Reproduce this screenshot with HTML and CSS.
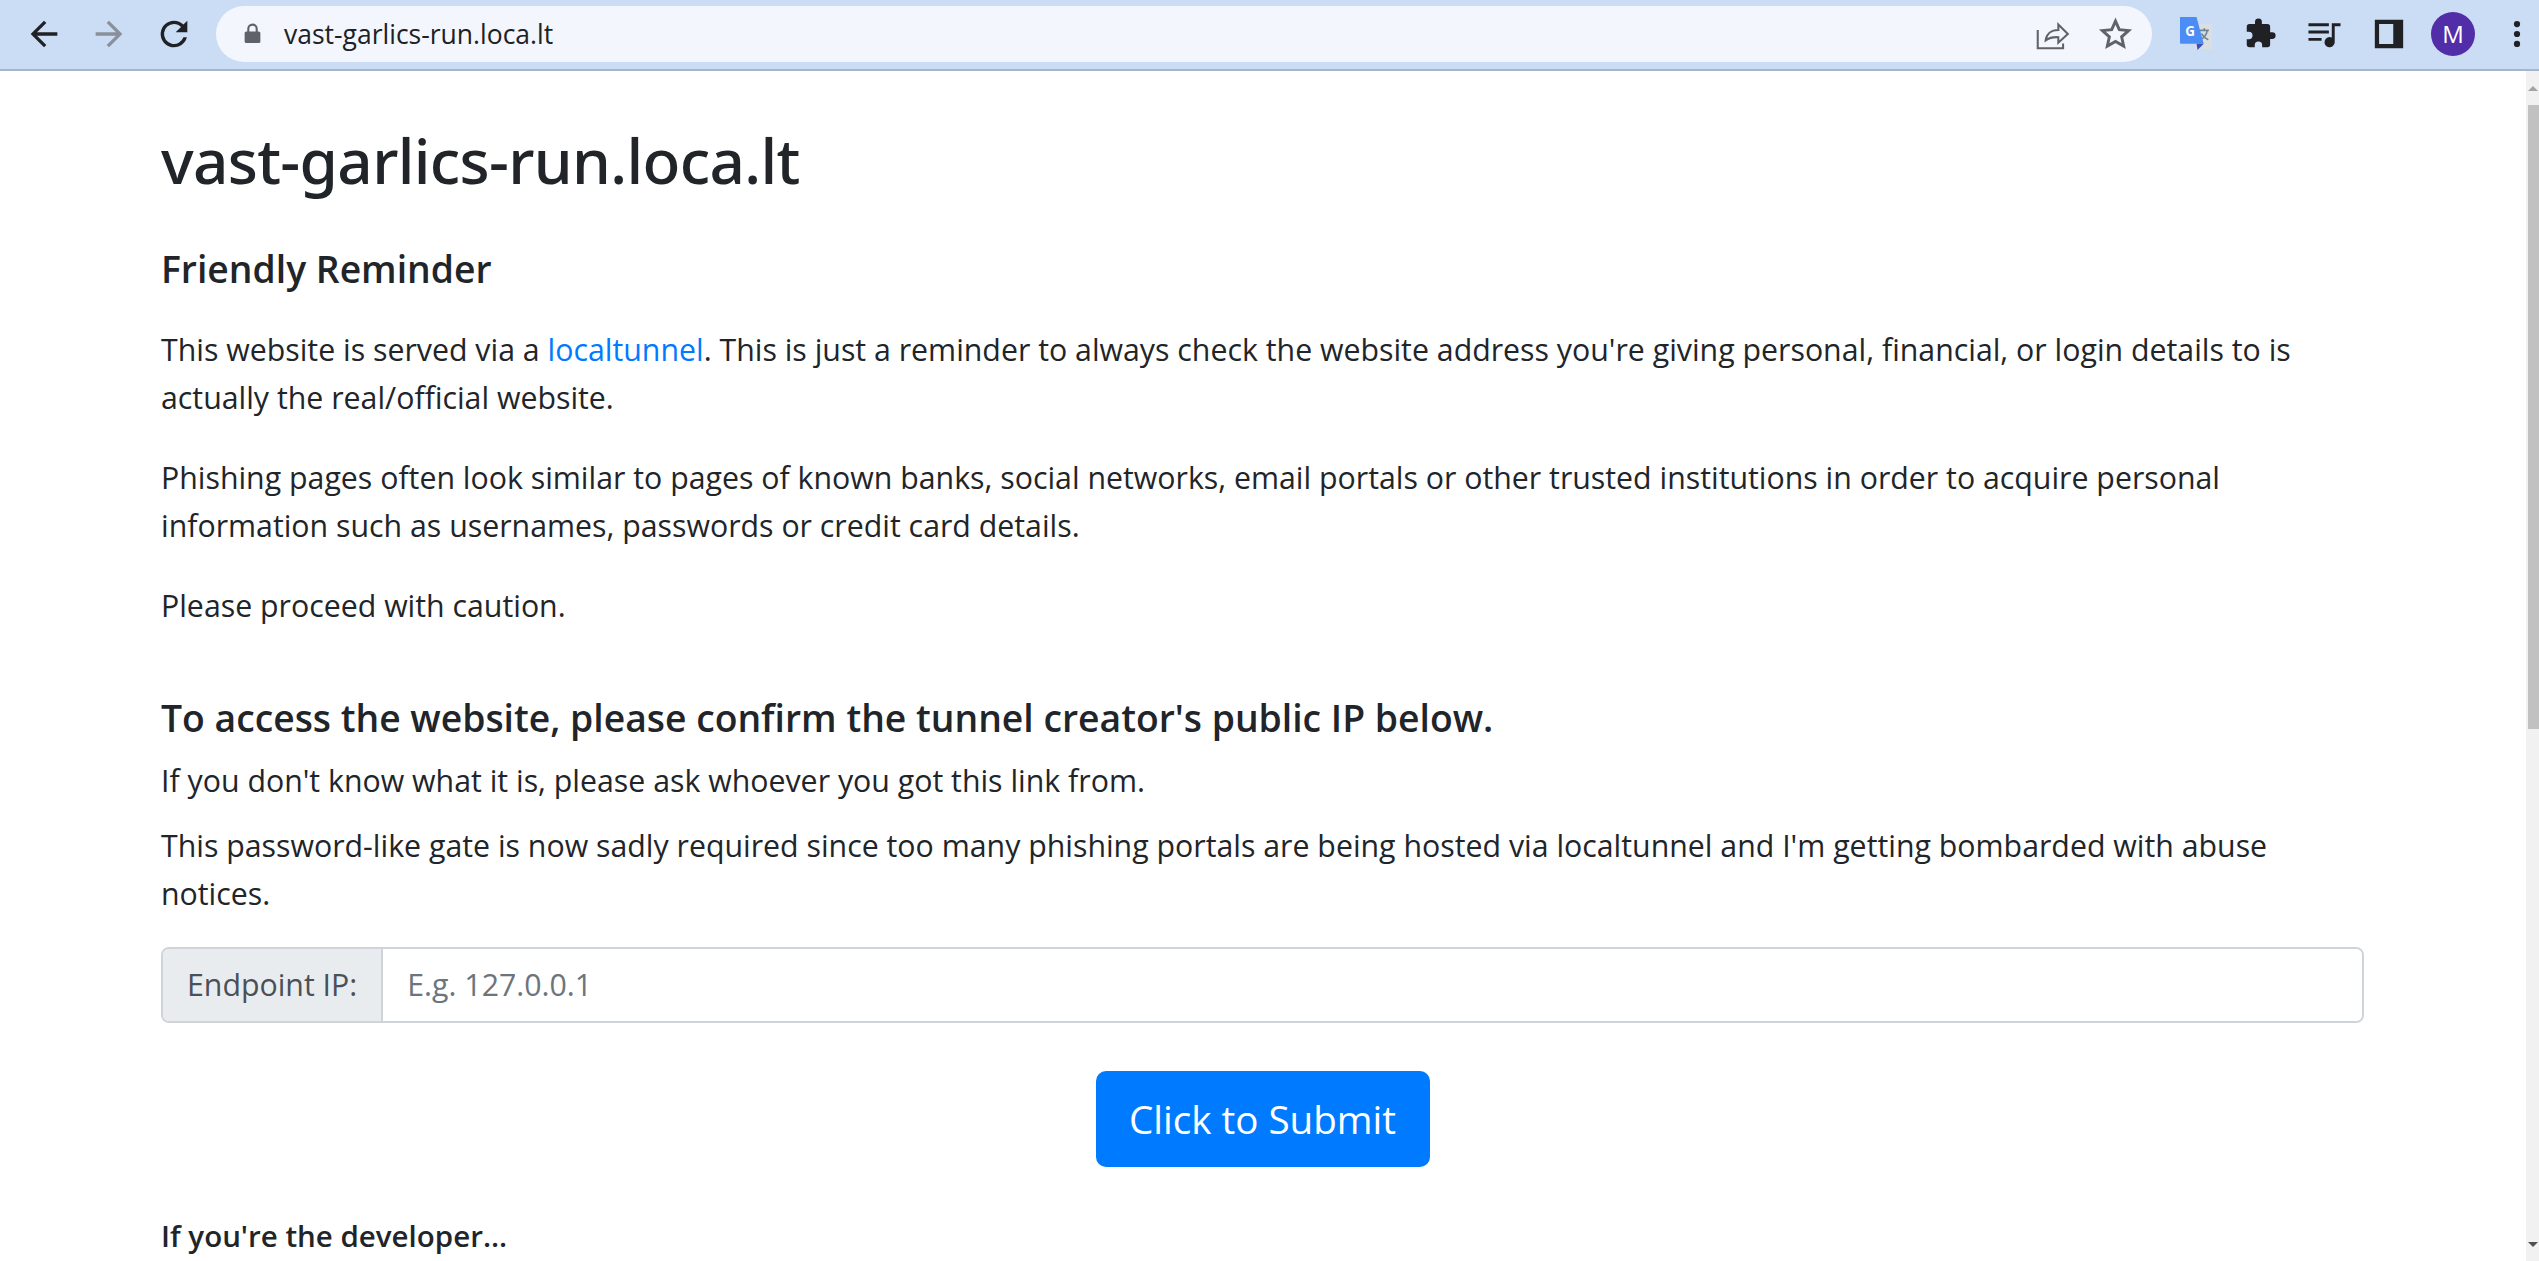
FILE: index.html
```html
<!DOCTYPE html>
<html lang="en">
<head>
  <meta charset="UTF-8" />
  <title>vast-garlics-run.loca.lt</title>
  <link rel="stylesheet" href="styles.css">
</head>
<body>
  <!-- Browser toolbar -->
  <header class="toolbar">
    <div class="nav-buttons">
      <svg class="nav-icon" viewBox="0 0 24 24"><path d="M20 11H7.800l5.600-5.600L12 4l-8 8 8 8 1.400-1.400L7.800 13H20z" fill="#202124"/></svg>
      <svg class="nav-icon" viewBox="0 0 24 24"><path d="M4 11h12.200l-5.600-5.600L12 4l8 8-8 8-1.400-1.400 5.600-5.600H4z" fill="#8a9099"/></svg>
      <svg class="nav-icon" viewBox="0 0 24 24"><path d="M17.650 6.350A7.960 7.960 0 0 0 12 4a8 8 0 1 0 7.730 10h-2.080A6 6 0 1 1 12 6c1.660 0 3.140.690 4.220 1.780L13 11h7V4z" fill="#202124"/></svg>
    </div>
    <div class="omnibox">
      <svg class="lock" viewBox="0 0 16 20"><path d="M3 8V5.500a5 5 0 0 1 10 0V8h1a1.500 1.500 0 0 1 1.500 1.500v8A1.500 1.500 0 0 1 14 19H2a1.500 1.500 0 0 1-1.500-1.500v-8A1.500 1.500 0 0 1 2 8zm2 0h6V5.500a3 3 0 0 0-6 0z" fill="#5f6368"/></svg>
      <span class="url">vast-garlics-run.loca.lt</span>
      <svg class="share" viewBox="0 0 24 24"><path d="M3 9.500V21h16v-3M8 16c.500-4 3.500-6.500 8-6.500V6l6 6-6 5.500V14c-3.500-.200-6 .500-8 2z" fill="none" stroke="#5f6368" stroke-width="1.300"/></svg>
      <svg class="star" viewBox="0 0 24 24"><path d="M12 3.500l2.600 5.900 6.400.600-4.800 4.300 1.400 6.300L12 17.400l-5.600 3.200 1.400-6.300L3 10l6.400-.600z" fill="none" stroke="#5f6368" stroke-width="2"/></svg>
    </div>
    <div class="extensions">
      <svg class="translate" viewBox="0 0 32 32">
        <path d="M15 7h15a1 1 0 0 1 1 1v22a1 1 0 0 1-1 1H14z" fill="#dcdfe2"/>
        <path d="M19 13h9m-4.500-2v2m3 0c-1 5-4 8-7 9m1.500-6c1.500 3 4 5 6.500 6" fill="none" stroke="#6f8792" stroke-width="1.600"/>
        <path d="M0 0h16l7 26H1a1 1 0 0 1-1-1z" fill="#4b8df5"/>
        <path d="M16 26h7l-6 6z" fill="#3e50b4"/>
        <text x="5" y="18" class="translate-g">G</text>
      </svg>
      <svg class="puzzle" viewBox="0 0 24 24"><path d="M20.500 11H19V7a2 2 0 0 0-2-2h-4V3.500a2.500 2.500 0 0 0-5 0V5H4a2 2 0 0 0-2 2v3.800h1.500a2.700 2.700 0 0 1 0 5.400H2V20a2 2 0 0 0 2 2h3.800v-1.500a2.700 2.700 0 0 1 5.400 0V22H17a2 2 0 0 0 2-2v-4h1.500a2.500 2.500 0 0 0 0-5z" fill="#202124"/></svg>
      <svg class="media" viewBox="0 0 24 24"><path d="M1 5h14v2H1zm0 5h14v2H1zm0 5h9v2H1zM17 5h6v2h-4v11a3.500 3.500 0 1 1-2-3.200z" fill="#202124"/></svg>
      <svg class="sidepanel" viewBox="0 0 24 24"><path d="M2 3h20v20H2zm3 3v14h10V6z" transform="translate(0 -1)" fill="#202124" fill-rule="evenodd"/></svg>
      <div class="avatar">M</div>
      <svg class="dots" viewBox="0 0 24 24"><circle cx="12" cy="5" r="2.200" fill="#202124"/><circle cx="12" cy="12" r="2.200" fill="#202124"/><circle cx="12" cy="19" r="2.200" fill="#202124"/></svg>
    </div>
  </header>

  <div class="viewport">
    <main class="container">
      <h1>vast-garlics-run.loca.lt</h1>

      <h4 class="reminder">Friendly Reminder</h4>
      <p>This website is served via a <a href="#">localtunnel</a>. This is just a reminder to always check the website address you're giving personal, financial, or login details to is actually the real/official website.</p>
      <p>Phishing pages often look similar to pages of known banks, social networks, email portals or other trusted institutions in order to acquire personal information such as usernames, passwords or credit card details.</p>
      <p>Please proceed with caution.</p>

      <h4 class="confirm">To access the website, please confirm the tunnel creator's public IP below.</h4>
      <p class="tight">If you don't know what it is, please ask whoever you got this link from.</p>
      <p class="abuse">This password-like gate is now sadly required since too many phishing portals are being hosted via localtunnel and I'm getting bombarded with abuse notices.</p>

      <form class="gate">
        <div class="input-group">
          <span class="input-label">Endpoint IP:</span>
          <input type="text" placeholder="E.g. 127.0.0.1" />
        </div>
        <button type="button" class="submit">Click to Submit</button>
      </form>

      <p class="developer">If you're the developer...</p>
    </main>

    <div class="scrollbar">
      <span class="arrow up"></span>
      <div class="track"><div class="thumb"></div></div>
      <span class="arrow down"></span>
    </div>
  </div>
</body>
</html>
```

FILE: styles.css
```css
* {
  box-sizing: border-box;
}
body {
  margin: 0;
  height: 1261px;
  overflow: hidden;
  display: flex;
  flex-direction: column;
  font-family: "Open Sans", "Noto Sans", sans-serif;
  color: #212529;
  background-color: white;
}
svg {
  display: block;
  flex-shrink: 0;
}

/* toolbar */
.toolbar {
  height: 71px;
  flex-shrink: 0;
  display: flex;
  align-items: center;
  padding: 0 0 2px 24px;
  background-color: #cbdcf5;
  border-bottom: 2px solid #a5b5cf;
}
.nav-buttons {
  display: flex;
  gap: 25px;
  margin-right: 22px;
}
.nav-icon {
  width: 40px;
  height: 40px;
}
.omnibox {
  width: 1936px;
  height: 56px;
  flex-shrink: 0;
  border-radius: 28px;
  background-color: #f3f7fd;
  display: flex;
  align-items: center;
  padding-left: 28px;
}
.lock {
  width: 17px;
  height: 21px;
}
.url {
  margin-left: 23px;
  font-size: 26.5px;
  color: #202124;
}
.share {
  width: 38px;
  height: 38px;
  margin-left: auto;
}
.star {
  width: 35px;
  height: 35px;
  margin-left: 27px;
  margin-right: 19px;
}
.extensions {
  display: flex;
  align-items: center;
  flex: 1;
}
.translate {
  width: 33px;
  height: 33px;
  margin-left: 28px;
}
.translate-g {
  font-size: 13px;
  font-weight: 700;
  fill: white;
}
.puzzle {
  width: 33px;
  height: 33px;
  margin-left: 31px;
}
.media {
  width: 35px;
  height: 35px;
  margin-left: 30px;
}
.sidepanel {
  width: 34px;
  height: 34px;
  margin-left: 30px;
}
.avatar {
  width: 44px;
  height: 44px;
  margin-left: 25px;
  border-radius: 50%;
  background-color: #512da8;
  color: white;
  font-size: 24px;
  display: flex;
  align-items: center;
  justify-content: center;
}
.dots {
  width: 34px;
  height: 34px;
  margin-left: 25px;
}

/* page */
.viewport {
  flex: 1;
  min-height: 0;
  display: flex;
}
.container {
  flex: 1;
  min-width: 0;
  padding: 52px 162px 0 161px;
}
h1 {
  margin: 0 0 50px;
  font-family: "Noto Sans", sans-serif;
  font-size: 62px;
  font-weight: 500;
  line-height: 1.2;
  letter-spacing: -0.67px;
}
h4 {
  margin: 0 0 16px;
  font-size: 37.3px;
  font-weight: 600;
  line-height: 1.2;
}
p {
  margin: 0 0 32px;
  font-size: 30.3px;
  line-height: 48px;
}
p.tight {
  margin-bottom: 17px;
}
p.abuse {
  margin-bottom: 29px;
}
.reminder {
  margin-bottom: 34px;
}
.confirm {
  margin-top: 66px;
  margin-bottom: 16px;
}
a {
  color: #007bff;
  text-decoration: none;
}
.gate {
  display: flex;
  flex-direction: column;
  align-items: center;
}
.input-group {
  width: 100%;
  height: 76px;
  display: flex;
  border: 2px solid #ced4da;
  border-radius: 8px;
  overflow: hidden;
}
.input-label {
  padding: 0 24px;
  display: flex;
  align-items: center;
  font-size: 30.3px;
  color: #495057;
  background-color: #e9ecef;
  border-right: 2px solid #ced4da;
}
.input-group input {
  flex: 1;
  border: none;
  outline: none;
  padding: 0 24px;
  font-family: inherit;
  font-size: 30.3px;
}
.input-group input::placeholder {
  color: #6c757d;
}
.submit {
  margin-top: 48px;
  width: 334px;
  height: 96px;
  border: none;
  border-radius: 10px;
  background-color: #007bff;
  color: white;
  font-family: inherit;
  font-size: 38.6px;
  cursor: pointer;
}
.developer {
  margin-top: 45px;
  font-size: 29.5px;
  font-weight: 600;
}

/* scrollbar */
.scrollbar {
  width: 13px;
  flex-shrink: 0;
  display: flex;
  flex-direction: column;
  background-color: #f1f1f1;
}
.track {
  flex: 1;
  padding-left: 2px;
}
.thumb {
  height: 624px;
  background-color: #c1c1c1;
}
.arrow {
  height: 34px;
  flex-shrink: 0;
  display: flex;
  align-items: center;
  justify-content: center;
}
.arrow::before {
  content: "";
  border-left: 5px solid transparent;
  border-right: 5px solid transparent;
}
.up::before {
  border-bottom: 5px solid #a3a3a3;
}
.down::before {
  border-top: 5px solid #505050;
}
```
